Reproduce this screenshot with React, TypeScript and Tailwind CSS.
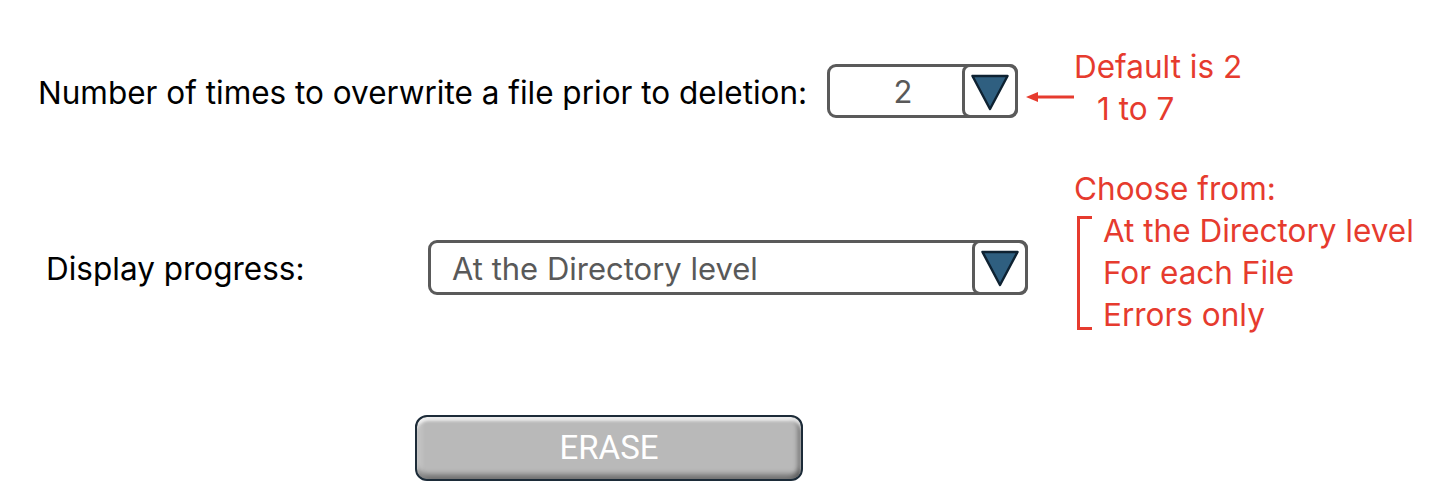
import { ReactNode } from 'react'

const red = 'text-[#e63b2e]'

function Triangle({ w, h }: { w: number; h: number }) {
  return (
    <svg width={w} height={h} viewBox="0 0 40 38">
      <polygon points="2,2 38,2 20,36" fill="#2f5f80" stroke="#0e2232" strokeWidth="2.5" strokeLinejoin="round" />
    </svg>
  )
}

function Dropdown({ children, className, textClass }: { children: ReactNode; className: string; textClass: string }) {
  return (
    <div className={`flex border-[3px] border-[#5a5a5a] rounded-[9px] bg-white ${className}`}>
      <div className={`flex-1 flex items-center pt-[3px] text-[#595959] text-[31px] ${textClass}`}>{children}</div>
      <div className="-my-[3px] -mr-[3px] w-[56px] border-[3px] border-[#5a5a5a] rounded-[8px] flex items-center justify-center pt-[2px]">
        <Triangle w={40} h={37} />
      </div>
    </div>
  )
}

export default function App() {
  return (
    <div className="w-[1454px] h-[504px] bg-white flex flex-col font-['Inter','Liberation_Sans',sans-serif]">
      {/* overwrite count */}
      <div className="flex items-start mt-[46px]">
        <div className="flex items-center mt-[18px] h-[54px] pl-[38px]">
          <span className="w-[789px] pt-[3px] text-[31.5px] text-black">Number of times to overwrite a file prior to deletion:</span>
          <Dropdown className="w-[191px] h-[54px]" textClass="justify-center pl-[14px]">2</Dropdown>
        </div>
        <svg className="mt-[45px] ml-[8px]" width="48" height="12" viewBox="0 0 48 12">
          <polygon points="0,6 12,1 12,11" fill="#e63b2e" />
          <rect x="10" y="4.5" width="38" height="3" fill="#e63b2e" />
        </svg>
        <div className={`${red} text-[31.5px] leading-[42px]`}>
          <div>Default is 2</div>
          <div className="pl-[23px]">1 to 7</div>
        </div>
      </div>

      {/* display progress */}
      <div className="flex items-start mt-[38px]">
        <div className="flex items-center mt-[72px] h-[55px] pl-[46px]">
          <span className="w-[382px] pt-[3px] text-[31.5px] text-black">Display progress:</span>
          <Dropdown className="w-[600px] h-[55px]" textClass="pl-[21px]">At the Directory level</Dropdown>
        </div>
        <div className={`ml-[46px] ${red} text-[31.5px] leading-[42px]`}>
          <div>Choose from:</div>
          <div className="flex">
            <div className="ml-[3px] my-[6px] w-[15px] border-l-[3px] border-t-[3px] border-b-[3px] border-[#e63b2e]" />
            <div className="ml-[11px]">
              <div>At the Directory level</div>
              <div>For each File</div>
              <div>Errors only</div>
            </div>
          </div>
        </div>
      </div>

      {/* erase */}
      <button className="mt-[79px] ml-[415px] w-[388px] h-[66px] rounded-[12px] border-2 border-[#1c2b38] bg-[#b9b9b9] text-white text-[33px] font-['Roboto',sans-serif] shadow-[inset_0_4px_3px_rgba(255,255,255,0.75),inset_0_-5px_5px_rgba(0,0,0,0.35),inset_4px_0_4px_rgba(255,255,255,0.35),inset_-4px_0_4px_rgba(0,0,0,0.25)]">
        ERASE
      </button>
    </div>
  )
}
